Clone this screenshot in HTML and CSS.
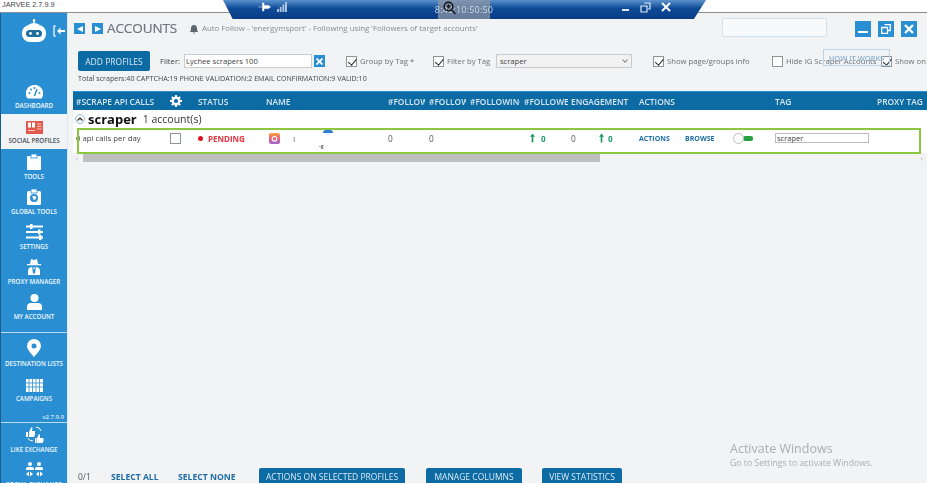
FILE: index.html
```html
<!DOCTYPE html>
<html lang="en">
<head>
<meta charset="utf-8">
<title>Jarvee</title>
<link rel="stylesheet" href="styles.css">
</head>
<body>
<div class="app">
  <header class="titlebar">JARVEE 2.7.9.9</header>
  <div class="shell">
    <nav class="sidebar">
      <div class="brand">
        <svg class="robot" width="26" height="24" viewBox="0 0 26 24"><path d="M13 0v4" stroke="#fff" stroke-width="1.5"/><circle cx="13" cy="1.5" r="1.3" fill="#fff"/><path d="M7 6q6-4 12 0" fill="#fff"/><rect x="1" y="6" width="24" height="17" rx="8" fill="#fff"/><rect x="5" y="11" width="16" height="7" rx="3.5" fill="#1c6f9e"/><circle cx="9.500" cy="14.500" r="1.400" fill="#fff"/><circle cx="16.500" cy="14.500" r="1.400" fill="#fff"/></svg>
        <svg class="collapse" width="12" height="12" viewBox="0 0 12 12"><path d="M3 1H1v10h2" fill="none" stroke="#fff" stroke-width="1.200"/><path d="M4 6l3.500-3.500V5H12v2H7.500v2.500z" fill="#fff"/></svg>
      </div>
      <a class="nav-item"><svg width="17" height="14" viewBox="0 0 17 14"><path d="M8.500 0a8.500 8.500 0 0 0-7 13.500h14a8.500 8.500 0 0 0-7-13.500z" fill="#fff"/><path d="M8.500 11L11 4" stroke="#2a8fd2" stroke-width="1.500"/><g fill="#2a8fd2"><circle cx="3.500" cy="8" r="1"/><circle cx="5" cy="4.500" r="1"/><circle cx="8.500" cy="3" r="1"/><circle cx="13.500" cy="8" r="1"/></g></svg><span>DASHBOARD</span></a>
      <a class="nav-item active"><svg width="17" height="13" viewBox="0 0 17 13"><rect width="17" height="13" fill="#e2584a"/><rect x="2" y="1.500" width="3" height="5" fill="#fff"/><rect x="6" y="1.500" width="3" height="5" fill="#fff"/><path d="M11 3h4.500M11 5.500h4.500M11 8h4.500M2 9.500h7" stroke="#f7c9c3"/></svg><span>SOCIAL PROFILES</span></a>
      <a class="nav-item"><svg width="14" height="16" viewBox="0 0 14 16"><rect y="2" width="14" height="14" rx="1" fill="#fff"/><rect x="4" width="6" height="4" fill="#fff" stroke="#2a8fd2" stroke-width=".8"/></svg><span>TOOLS</span></a>
      <a class="nav-item"><svg width="14" height="16" viewBox="0 0 14 16"><rect y="2" width="14" height="14" rx="1.500" fill="#fff"/><rect x="4" width="6" height="4" fill="#fff" stroke="#2a8fd2" stroke-width=".8"/><circle cx="7" cy="9" r="4" fill="#2a8fd2"/><path d="M5 7.500l3-.8 1.500 2-2 2.500-1-1z" fill="#fff"/></svg><span>GLOBAL TOOLS</span></a>
      <a class="nav-item"><svg width="17" height="16" viewBox="0 0 17 16"><path d="M0 2.500h17M0 8h17M0 13.500h17" stroke="#fff" stroke-width="1.800"/><rect x="4" y="0" width="2.500" height="5" fill="#fff"/><rect x="12" y="5.500" width="2.500" height="5" fill="#fff"/><rect x="13" y="11" width="2.500" height="5" fill="#fff"/></svg><span>SETTINGS</span></a>
      <a class="nav-item"><svg width="14" height="17" viewBox="0 0 14 17"><path d="M3 6l1-5 3 1 3-1 1 5z" fill="#fff"/><rect x="0" y="6" width="14" height="1.300" fill="#fff"/><path d="M1 17v-4q0-3 3-4 3 1 6 0 3 1 3 4v4z" fill="#fff"/><path d="M5 8.500l2 3 2-3-1 7H6z" fill="#2a8fd2"/></svg><span>PROXY MANAGER</span></a>
      <a class="nav-item"><svg width="15" height="16" viewBox="0 0 15 16"><circle cx="7.500" cy="4" r="4" fill="#fff"/><path d="M0 16v-3q0-4 4-4h7q4 0 4 4v3z" fill="#fff"/></svg><span>MY ACCOUNT</span></a>
      <div class="nav-group">
        <a class="nav-item"><svg width="14" height="18" viewBox="0 0 14 18"><path d="M7 0a7 7 0 0 0-7 7c0 4 7 11 7 11s7-7 7-11a7 7 0 0 0-7-7z" fill="#fff"/><circle cx="7" cy="7" r="2.500" fill="#2a8fd2"/></svg><span>DESTINATION LISTS</span></a>
        <a class="nav-item"><svg width="17" height="15" viewBox="0 0 17 15"><rect y="2" width="17" height="13" fill="#fff"/><path d="M3 0v15M6.500 0v15M10 0v15M13.500 0v15M0 6h17M0 10h17" stroke="#2a8fd2" stroke-width=".8"/></svg><span>CAMPAIGNS</span></a>
        <div class="version">v2.7.9.9</div>
      </div>
      <div class="nav-group">
        <a class="nav-item"><svg width="19" height="18" viewBox="0 0 19 18"><path d="M1 7h2v5H1zM4 7l2.500-5 1 .5L7 6h3v4l-1 2H4zM10 13h1.500v5H10zM12 13l2-4 1 .5V13h3.500v3l-1 2H12z" fill="#fff"/><path d="M11 2q4 0 5 4M8 16q-4 0-5-3" fill="none" stroke="#fff"/></svg><span>LIKE EXCHANGE</span></a>
        <a class="nav-item"><svg width="17" height="16" viewBox="0 0 17 16"><g fill="#fff"><circle cx="4" cy="2" r="2"/><circle cx="13" cy="2" r="2"/><path d="M0 8V6.500Q0 5 2 5h4q2 0 2 1.500V8zM9 8V6.500Q9 5 11 5h4q2 0 2 1.500V8z"/><path d="M0 12l3-2.500v5zM7 12l-3-2.500v5zM10 12l3-2.500v5zM17 12l-3-2.500v5z"/></g></svg><span>SOCIAL EXCHANGE</span></a>
      </div>
    </nav>
    <main class="main">
      <section class="heading">
        <button class="arrow" aria-label="Back"><i class="tri left"></i></button>
        <button class="arrow" aria-label="Forward"><i class="tri right"></i></button>
        <h1>ACCOUNTS</h1>
        <svg class="bell" width="8" height="9" viewBox="0 0 8 9"><path d="M4 0q3 0 3 3.500 0 2 1 3.500H0q1-1.500 1-3.500Q1 0 4 0zM3 7.500h2L4 9z" fill="#5e666d"/></svg>
        <p class="notice">Auto Follow - 'energymsport' - Following using 'Followers of target accounts'</p>
        <div class="search"></div>
        <div class="win-buttons">
          <button class="win"><i class="min"></i></button>
          <button class="win"><svg width="10" height="10" viewBox="0 0 10 10"><path d="M3.500.7h5.800v5.800H7M.7 3.500h5.800v5.800H.7z" fill="none" stroke="#fff" stroke-width="1.300"/></svg></button>
          <button class="win"><svg width="10" height="10" viewBox="0 0 10 10"><path d="M1 1l8 8M9 1l-8 8" stroke="#fff" stroke-width="2.400"/></svg></button>
        </div>
      </section>
      <section class="controls">
        <button class="btn add">ADD PROFILES</button>
        <span class="lbl filter-lbl">Filter:</span>
        <div class="input filter-input">Lychee scrapers 100</div>
        <button class="clear"><svg width="7" height="7" viewBox="0 0 7 7"><path d="M.5.500l6 6M6.500.500l-6 6" stroke="#fff" stroke-width="1.800"/></svg></button>
        <label class="check c-group"><i class="box on"></i>Group by Tag *</label>
        <label class="check c-filter"><i class="box on"></i>Filter by Tag</label>
        <div class="input select">scraper<i class="caret"></i></div>
        <label class="check c-show"><i class="box on"></i>Show page/groups info</label>
        <label class="check c-hide"><i class="box"></i>Hide IG Scraper Accounts</label>
        <label class="check c-on"><i class="box on"></i>Show on</label>
        <button class="how">HOW IT WORKS</button>
      </section>
      <p class="stats">Total scrapers:40 CAPTCHA:19 PHONE VALIDATION:2 EMAIL CONFIRMATION:9 VALID:10</p>
      <section class="table">
        <div class="cols head">
          <span>#SCRAPE API CALLS</span>
          <span><svg width="12" height="12" viewBox="0 0 12 12"><circle cx="6" cy="6" r="3.300" fill="none" stroke="#fff" stroke-width="2.400"/><path d="M6 0v2.500M6 9.500V12M0 6h2.500M9.500 6H12M1.800 1.800l1.800 1.800M8.400 8.400l1.800 1.800M10.200 1.800L8.400 3.600M3.600 8.400l-1.800 1.800" stroke="#fff" stroke-width="1.800"/></svg></span>
          <span>STATUS</span><span>NAME</span>
          <span>#FOLLOWERS</span><span>#FOLLOWERS</span><span>#FOLLOWING</span><span>#FOLLOWERS</span>
          <span>ENGAGEMENT</span><span>ACTIONS</span><span>TAG</span><span>PROXY TAG</span>
        </div>
        <div class="group">
          <i class="chev"><svg width="6" height="4" viewBox="0 0 6 4"><path d="M.5 3.500L3 1l2.500 2.500" fill="none" stroke="#222" stroke-width="1.200"/></svg></i>
          <strong>scraper</strong><span>1 account(s)</span>
        </div>
        <div class="cols row">
          <span class="calls">0 api calls per day</span>
          <span><i class="box"></i></span>
          <span class="pending"><i class="dot"></i>PENDING</span>
          <span class="name">
            <svg width="11" height="11" viewBox="0 0 11 11"><defs><linearGradient id="ig" x1="0" y1="0" x2="0" y2="1"><stop offset="0" stop-color="#f6a63c"/><stop offset=".5" stop-color="#e8607a"/><stop offset="1" stop-color="#9a68d8"/></linearGradient></defs><rect width="11" height="11" rx="2" fill="url(#ig)"/><circle cx="5.500" cy="5.800" r="2.300" fill="none" stroke="#fff" stroke-width="1.100"/></svg>
            <span class="bar">I</span><i class="avatar"></i><span class="tiny">-g</span>
          </span>
          <span>0</span><span>0</span><span></span>
          <span class="up first"><svg width="5" height="10" viewBox="0 0 6 11"><path d="M3 0l3 4H4v7H2V4H0z" fill="#1c9a63"/></svg>0</span>
          <span class="eng"><em>0</em><b class="up"><svg width="5" height="10" viewBox="0 0 6 11"><path d="M3 0l3 4H4v7H2V4H0z" fill="#1c9a63"/></svg>0</b></span>
          <span class="acts"><a>ACTIONS</a><a>BROWSE</a><i class="toggle"><i class="knob"></i></i></span>
          <span><div class="input tag">scraper</div></span>
          <span></span>
        </div>
        <div class="hscroll"><span class="sa">‹</span><i class="thumb"></i><span class="sb">›</span></div>
        <div class="highlight"></div>
      </section>
      <footer class="footer">
        <span class="count">0/1</span>
        <a class="sel all">SELECT ALL</a>
        <a class="sel none">SELECT NONE</a>
        <button class="btn b1">ACTIONS ON SELECTED PROFILES</button>
        <button class="btn b2">MANAGE COLUMNS</button>
        <button class="btn b3">VIEW STATISTICS</button>
      </footer>
    </main>
  </div>
  <div class="remote">
    <svg class="pin" width="13" height="10" viewBox="0 0 12 10"><path d="M0 5h4M4 1v8h1.500V6.500H10l2-1.500-2-1.500H5.500V1z" fill="#fff" stroke="#fff" stroke-width=".5"/></svg>
    <svg class="signal" width="10" height="10" viewBox="0 0 10 10"><path d="M0 7h2v3H0zM2.700 5h2v5h-2zM5.400 2.500h2V10h-2zM8 0h2v10H8z" fill="#a9c3de"/></svg>
    <div class="zoombox">
      <span>8:40:10:50:50</span>
      <svg width="13" height="14" viewBox="0 0 13 14"><circle cx="5.500" cy="5.500" r="4.300" fill="none" stroke="#111" stroke-width="1.500"/><path d="M8.500 9l4 4M3.500 5.500h4M5.500 3.500v4" stroke="#111" stroke-width="1.400"/></svg>
    </div>
    <i class="r-min"></i>
    <svg class="r-res" width="11" height="11" viewBox="0 0 11 11"><path d="M4 1h6v6H8M1 4h6v6H1z" fill="none" stroke="#dce8f5" stroke-width="1.200"/></svg>
    <svg class="r-x" width="10" height="10" viewBox="0 0 10 10"><path d="M1 1l8 8M9 1l-8 8" stroke="#fff" stroke-width="2"/></svg>
  </div>
  <div class="watermark">
    <div class="w1">Activate Windows</div>
    <div class="w2">Go to Settings to activate Windows.</div>
  </div>
</div>
</body>
</html>
```
FILE: styles.css
```css
* { box-sizing: border-box; }
html, body { margin: 0; padding: 0; }
body { font-family: "Open Sans", "Liberation Sans", sans-serif; color: #555; background: #f2f3f5; }
i { display: block; font-style: normal; }
p, h1 { margin: 0; }
button { font-family: inherit; border: 0; padding: 0; }

.app { position: relative; width: 927px; height: 483px; overflow: hidden; display: flex; flex-direction: column; filter: blur(.35px); }
.titlebar { height: 13px; flex: none; background: #fff; font-size: 7.300px; line-height: 10px; padding: 0 0 0 2px; color: #444; border-bottom: 1px solid #8a8f94; font-family: "Liberation Sans", sans-serif; }
.shell { flex: 1; display: flex; min-height: 0; }

/* sidebar */
.sidebar { width: 68px; flex: none; background: #2a8fd2; border-left: 1px solid #175f8e; border-right: 1px solid #d9e8f4; color: #fff; display: flex; flex-direction: column; }
.brand { height: 66px; flex: none; position: relative; display: flex; padding: 5px 0 0 20px; gap: 6px; }
.robot { margin-top: 1px; }
.collapse { margin-top: 7px; }
.nav-item { height: 35.2px; flex: none; display: flex; flex-direction: column; align-items: center; justify-content: flex-end; gap: 3px; padding-bottom: 4px; }
.nav-item span { font-size: 6.200px; line-height: 8px; font-weight: 600; white-space: nowrap; color: #f0f7fc; }
.nav-item.active { background: #f2f3f5; }
.nav-item.active span { color: #44505a; }
.nav-group { border-top: 1px solid #bcdcf1; margin-top: 7px; padding-top: 3px; flex: none; }
.nav-group + .nav-group { margin-top: 0; padding-top: 0; }
.nav-group + .nav-group .nav-item:first-child { height: 35.2px; }
.version { text-align: right; font-size: 6px; line-height: 8px; padding: 6px 3px 1px 0; color: #fff; }

/* main */
.main { flex: 1; min-width: 0; display: flex; flex-direction: column; padding: 0; }
.heading { height: 38px; flex: none; display: flex; align-items: flex-start; padding: 10px 0 0 6px; position: relative; }
.arrow { width: 11px; height: 11px; margin-right: 7px; background: #2a8fd2; display: flex; align-items: center; justify-content: center; flex: none; }
.heading .arrow:nth-child(2) { margin-right: 4px; }
.tri { width: 0; height: 0; border-top: 3.500px solid transparent; border-bottom: 3.500px solid transparent; }
.tri.left { border-right: 6px solid #fff; }
.tri.right { border-left: 6px solid #fff; }
h1 { font-size: 13.500px; line-height: 11px; font-weight: 400; color: #6b767f; letter-spacing: -.1px; width: 83px; flex: none; -webkit-text-stroke: .2px #6b767f; }
.bell { margin: 2px 4px 0 0; flex: none; }
.notice { font-size: 7.850px; line-height: 11px; color: #868d93; white-space: nowrap; width: 520px; flex: none; }
.search { width: 105px; height: 19px; margin-top: -5px; background: #f7f9fb; border: 1px solid #cfe3f2; border-radius: 1px; flex: none; }
.win-buttons { display: flex; gap: 7px; margin: -2px 0 0 28px; }
.win { width: 16px; height: 16px; background: #2a8fd2; display: flex; align-items: center; justify-content: center; }
.min { width: 10px; height: 2.500px; background: #fff; margin-top: 6px; }

.controls { height: 20px; flex: none; display: flex; align-items: center; padding-left: 10px; font-size: 7.700px; position: relative; }
.btn { background: #0c6ba3; color: #dbe9f3; border-radius: 2px; font-size: 8.500px; flex: none; text-align: center; white-space: nowrap; }
.btn.add { width: 72px; height: 20px; }
.lbl { margin-left: 10px; width: 24px; flex: none; color: #444; }
.input { background: #fff; border: 1px solid #c9cccf; color: #444; font-size: 7.600px; line-height: 12px; padding-left: 1px; position: relative; white-space: nowrap; }
.filter-input { width: 128px; height: 14px; flex: none; }
.clear { width: 11px; height: 12px; margin-left: 2px; background: #2a8fd2; display: flex; align-items: center; justify-content: center; flex: none; }
.check { display: flex; align-items: center; gap: 3px; flex: none; white-space: nowrap; color: #6a7076; height: 14px; }
.box { width: 11px; height: 11px; border: 1px solid #8f9498; background: #fff; position: relative; flex: none; }
.box.on::after { content: ""; position: absolute; left: 2.500px; top: .5px; width: 3.500px; height: 6.500px; border: solid #222; border-width: 0 1.300px 1.300px 0; transform: rotate(40deg); }
.c-group { margin-left: 21px; width: 87px; }
.c-filter { width: 63px; }
.select { width: 136px; height: 14px; flex: none; background: #f2f2f2; padding-left: 3px; }
.caret { position: absolute; right: 4px; top: 3px; width: 4px; height: 4px; border: solid #888; border-width: 0 1px 1px 0; transform: rotate(45deg); }
.c-show { margin-left: 21px; width: 119px; }
.c-hide { width: 109px; }
.c-on { width: 60px; }
.how { position: absolute; left: 755px; top: -2px; width: 67px; height: 17px; background: transparent; border: 1px solid #b6d4ea; font-size: 7.500px; font-weight: 600; color: #8fb3d0; white-space: nowrap; }

.stats { font-size: 7.100px; line-height: 9px; color: #444; padding: 3px 0 0 10px; height: 20px; flex: none; white-space: nowrap; }

.table { position: relative; margin-left: 5px; flex: none; }
.cols { display: grid; grid-template-columns: 94px 28px 68px 122px 41px 41px 54px 47px 68px 136px 102px 50px; padding-left: 3px; align-items: center; width: 854px; }
.cols > span { white-space: nowrap; overflow: hidden; min-width: 0; display: block; }
.head { height: 19px; background: #0c6ba3; color: #d8e7f2; font-size: 8.400px; font-weight: 600; border-top: 1px solid #2a8fd2; }
.head svg { display: block; }
.head > span:nth-child(5), .head > span:nth-child(6) { width: 37px; }
.head > span:nth-child(7) { width: 50px; }
.head > span:nth-child(8) { width: 44px; }
.group { height: 18px; display: flex; align-items: center; padding-left: 2px; background: #fff; width: 854px; font-size: 10.500px; color: #333; }
.chev { width: 10px; height: 10px; border-radius: 50%; border: 1px solid #8dbce0; display: flex; align-items: center; justify-content: center; margin-right: 3px; flex: none; }
.group strong { font-size: 13px; color: #111; margin-right: 6px; line-height: 14px; }
.row { height: 25px; background: #fff; font-size: 8.300px; color: #555; padding-bottom: 5px; }
.calls { font-size: 7.800px; color: #444; }
.pending { display: flex !important; align-items: center; gap: 5px; color: #e8343f; font-weight: 700; font-size: 8px; }
.dot { width: 5px; height: 5px; border-radius: 50%; background: #e01020; flex: none; }
.name { display: flex !important; align-items: center; margin-left: 3px; position: relative; height: 20px; overflow: visible !important; }
.bar { margin-left: 13px; font-size: 8px; color: #666; }
.avatar { width: 10px; height: 3px; border-radius: 5px 5px 0 0; background: #2a7bd2; margin: -13px 0 0 28px; }
.tiny { font-size: 5.500px; position: absolute; left: 50px; top: 14px; color: #333; }
.up { display: flex !important; align-items: center; gap: 6px; color: #1c9a63; font-weight: 700; font-size: 8px; }
.up.first { padding-left: 6px; }
.up svg { flex: none; }
.eng { display: flex !important; align-items: center; }
.eng em { font-style: normal; width: 28px; flex: none; }
.eng .up { gap: 4px; }
.acts { display: flex !important; align-items: center; }
.acts a { color: #1f6ea6; font-weight: 700; font-size: 7px; flex: none; }
.acts a:first-child { width: 46px; }
.acts a:nth-child(2) { width: 48px; }
.toggle { width: 20px; height: 11px; position: relative; flex: none; }
.toggle::after { content: ""; position: absolute; left: 10px; top: 3px; width: 10px; height: 5px; border-radius: 2px; background: #25a244; }
.knob { position: absolute; left: 0; top: 0; width: 11px; height: 11px; border-radius: 50%; background: #fff; border: 1px solid #bbb; z-index: 1; }
.tag { width: 94px; height: 10px; line-height: 8px; border-color: #bbb; font-size: 7.500px; }
.hscroll { height: 9px; background: #f2f3f5; padding-left: 3px; width: 850px; display: flex; font-size: 8px; line-height: 9px; color: #aaa; }
.sa { width: 7px; flex: none; }
.sb { margin-left: auto; }
.thumb { width: 517px; height: 9px; background: #bebfc0; flex: none; }
.highlight { position: absolute; left: 4px; top: 37px; width: 844px; height: 26px; border: 2px solid #8dc63f; pointer-events: none; }

.footer { margin-top: auto; height: 15px; flex: none; display: flex; align-items: flex-start; padding-left: 10px; font-size: 8.500px; overflow: hidden; }
.count { width: 33px; flex: none; color: #555; line-height: 18px; }
.sel { color: #1f6ea6; font-weight: 700; flex: none; line-height: 18px; font-size: 8.600px; white-space: nowrap; }
.sel.all { width: 67px; }
.sel.none { width: 81px; }
.footer .btn { height: 20px; padding-bottom: 3px; }
.b1 { width: 146px; }
.b2 { width: 96px; margin-left: 21px; }
.b3 { width: 80px; margin-left: 20px; }

/* remote session bar */
.remote { position: absolute; left: 223px; top: 0; width: 483px; height: 19px; background: linear-gradient(#5b92cc, #0d4a96 45%, #0a3d86); clip-path: polygon(0 0, 100% 0, 97.500% 100%, 2% 100%); }
.pin { position: absolute; left: 35px; top: 2px; }
.signal { position: absolute; left: 54px; top: 2px; }
.zoombox { position: absolute; left: 215px; top: 0; width: 52px; height: 19px; background: rgba(140,150,165,.75); display: flex; align-items: center; justify-content: center; }
.zoombox span { font-size: 9px; color: #d3dbe4; letter-spacing: .2px; white-space: nowrap; }
.zoombox svg { position: absolute; left: 5px; top: 1px; }
.r-min { position: absolute; left: 399px; top: 9px; width: 7px; height: 2px; background: #dce8f5; }
.r-res { position: absolute; left: 417px; top: 2px; }
.r-x { position: absolute; left: 438px; top: 2px; }

/* watermark */
.watermark { position: absolute; left: 730px; top: 441px; color: #a9adb2; pointer-events: none; }
.w1 { font-size: 12.500px; line-height: 15px; }
.w2 { font-size: 8.700px; line-height: 13px; margin-top: 1px; white-space: nowrap; }
```
